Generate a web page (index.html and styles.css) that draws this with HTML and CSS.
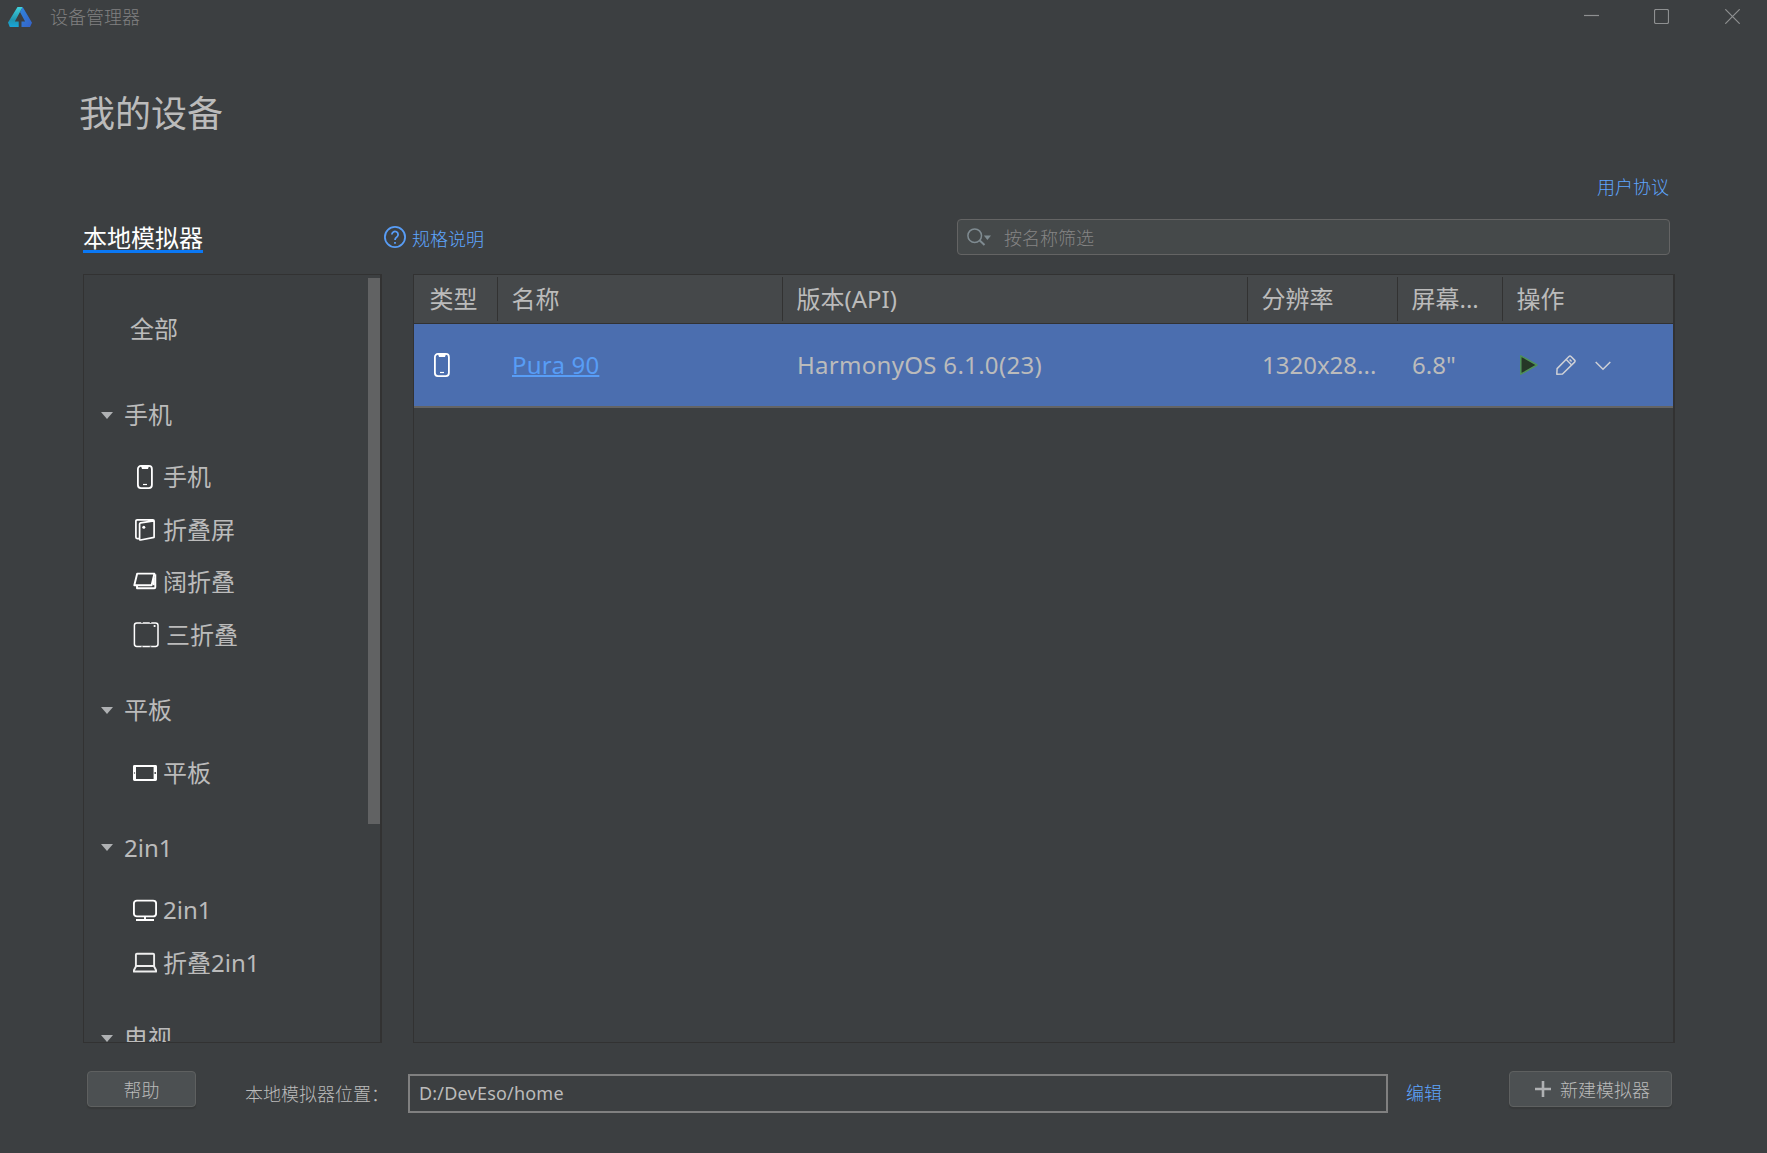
FILE: index.html
```html
<!DOCTYPE html>
<html lang="zh-CN">
<head>
    <meta charset="UTF-8">
    <title>设备管理器</title>
    <link rel="stylesheet" href="styles.css">
</head>
<body>

    <svg class="symbols">
        <symbol id="phone" viewBox="0 0 24 24">
            <rect x="4.9" y="0.9" width="14" height="22.2" rx="3" fill="none" stroke="#fff" stroke-width="1.8"/>
            <path d="M8 1h8l-1 3H9z" fill="#fff"/>
            <path d="M10 19.5h4" stroke="#fff" stroke-width="1.2"/>
        </symbol>
    </svg>

    <header class="titlebar">
        <svg class="logo" width="24" height="20" viewBox="0 0 24 20">
            <defs>
                <linearGradient id="logoLeft" x1="0" y1="0" x2="0" y2="1">
                    <stop offset="0" stop-color="#41d3dd"/>
                    <stop offset="0.65" stop-color="#1f94b0"/>
                    <stop offset="1" stop-color="#19a5d8"/>
                </linearGradient>
                <linearGradient id="logoRight" x1="0" y1="0" x2="1" y2="1">
                    <stop offset="0" stop-color="#2f86dd"/>
                    <stop offset="1" stop-color="#3561c8"/>
                </linearGradient>
            </defs>
            <path d="M9.5 0h5.2L6.8 14.6h3.9V20H1.8L0 15.6z" fill="url(#logoLeft)"/>
            <path d="M14.7 0L24 15.8 22 20h-8.5v-5.4h3.6L12 5z" fill="url(#logoRight)"/>
        </svg>
        <span class="window-title">设备管理器</span>
        <div class="window-buttons">
            <svg width="15" height="15"><path d="M0 6.5h15"/></svg>
            <svg width="15" height="15"><rect x="0.5" y="0.5" width="14" height="14" rx="1.5"/></svg>
            <svg width="15" height="15"><path d="M0.3 0.3l14.4 14.4M14.7 0.3L0.3 14.7"/></svg>
        </div>
    </header>

    <main>
        <h1>我的设备</h1>
        <div class="agreement"><a href="#">用户协议</a></div>

        <div class="toolbar">
            <span class="tab">本地模拟器</span>
            <a class="spec" href="#">
                <svg width="22" height="22" viewBox="0 0 22 22" fill="none" stroke="#589df6" stroke-width="1.8">
                    <circle cx="11" cy="11" r="10.1"/>
                    <path d="M7.9 8.6a3.1 3.1 0 1 1 4.9 2.5c-1.2.8-1.8 1.3-1.8 2.9"/>
                    <path d="M11 15.9v1.9"/>
                </svg>
                <span>规格说明</span>
            </a>
            <div class="search">
                <svg width="24" height="18" viewBox="0 0 24 18">
                    <circle cx="7.7" cy="7.7" r="6.8" fill="none" stroke="#7f8b91" stroke-width="1.5"/>
                    <path d="M12.5 12.3l5 4.7" stroke="#7f8b91" stroke-width="2"/>
                    <path d="M16.8 7.5H24l-3.6 4.5z" fill="#7f8b91"/>
                </svg>
                <span>按名称筛选</span>
            </div>
        </div>

        <div class="panels">
            <nav class="sidebar">
                <div class="all">全部</div>

                <div class="group">手机</div>
                <div class="item"><svg width="24" height="24"><use href="#phone"/></svg>手机</div>
                <div class="item">
                    <svg width="24" height="24" viewBox="0 0 24 24" fill="none" stroke="#fff" stroke-width="1.7" stroke-linejoin="round">
                        <path d="M6 20.6H4.2q-1.3 0-1.3-1.3V3.1q0-1.3 1.3-1.3h15.7q1.2 0 1.2 1.2v16.3L7.6 22q-1 .1-1-1V6q0-1 1-1.2l13-2"/>
                        <circle cx="10.8" cy="9.2" r="1.5" fill="#fff" stroke="none"/>
                    </svg>折叠屏
                </div>
                <div class="item">
                    <svg width="24" height="24" viewBox="0 0 24 24" fill="none" stroke="#fff" stroke-width="1.9" stroke-linejoin="round">
                        <path d="M4.2 3.6h17.2L18.6 15.2H1.3z"/>
                        <path d="M4 15.5v2.7h17.3q1 0 1-1V4.2"/>
                        <path d="M20.8 7.7v7.5"/>
                    </svg>阔折叠
                </div>
                <div class="item wide">
                    <svg width="26" height="26" viewBox="0 0 26 26" fill="none" stroke="#fff" stroke-width="1.5">
                        <rect x="1.4" y="0.9" width="23.6" height="23.6" rx="2.4"/>
                        <path d="M9 0v1M17.5 0v1M9 24.4v1M17.5 24.4v1" stroke="#3c3f41"/>
                        <circle cx="21.6" cy="4" r="1.1" fill="#fff" stroke="none"/>
                    </svg>三折叠
                </div>

                <div class="group">平板</div>
                <div class="item">
                    <svg width="24" height="24" viewBox="0 0 24 24">
                        <path fill="#fff" fill-rule="evenodd" d="M1.4 4h21.2q1.4 0 1.4 1.4v13.2q0 1.4-1.4 1.4H1.4Q0 20 0 18.6V5.4Q0 4 1.4 4zM3 6v12h17.6V6z"/>
                        <circle cx="1.5" cy="12" r=".7" fill="#3c3f41"/>
                        <circle cx="22.2" cy="12" r=".9" fill="#3c3f41"/>
                    </svg>平板
                </div>

                <div class="group">2in1</div>
                <div class="item">
                    <svg width="24" height="24" viewBox="0 0 24 24" fill="none" stroke="#fff" stroke-width="1.9">
                        <rect x=".9" y="2.6" width="22.2" height="15.8" rx="3"/>
                        <path d="M12 18v3M3 22h18"/>
                    </svg>2in1
                </div>
                <div class="item">
                    <svg width="24" height="24" viewBox="0 0 24 24" fill="none" stroke="#eee" stroke-width="1.9" stroke-linejoin="round">
                        <path d="M2.9 15V3.8q0-1 1-1h16.2q1 0 1 1V15z"/>
                        <path d="M3 15.3L.9 19.2v1.3h22.2v-1.3L21 15.3"/>
                    </svg>折叠2in1
                </div>

                <div class="group">电视</div>
                <div class="scrollbar"></div>
            </nav>

            <section class="devices">
                <div class="row head">
                    <div>类型</div>
                    <div>名称</div>
                    <div>版本(API)</div>
                    <div>分辨率</div>
                    <div>屏幕...</div>
                    <div>操作</div>
                </div>
                <div class="row selected">
                    <div class="type"><svg width="24" height="24"><use href="#phone"/></svg></div>
                    <div><a class="device-name" href="#">Pura 90</a></div>
                    <div class="version">HarmonyOS 6.1.0(23)</div>
                    <div>1320x28...</div>
                    <div>6.8"</div>
                    <div class="actions">
                        <svg width="20" height="20" viewBox="0 0 20 20">
                            <path d="M1.8 .8v18.4L18 10z" fill="#253627" stroke="#4f9158" stroke-width="1.5" stroke-linejoin="round"/>
                        </svg>
                        <svg width="20" height="20" viewBox="0 0 20 20" fill="none" stroke="#ced0d6" stroke-width="1.5" stroke-linejoin="round">
                            <path d="M.8 19.2l.3-5.6L13 1.5q1-1 2 0l3.6 3.6q1 1 0 2L6.5 19z"/>
                            <path d="M10.2 4.5l5.2 5.3M13.6 4.5l2 2"/>
                        </svg>
                        <svg width="16" height="10" viewBox="0 0 16 10" fill="none" stroke="#ced0d6" stroke-width="1.5">
                            <path d="M.7 1l7.3 7.3L15.3 1"/>
                        </svg>
                    </div>
                </div>
            </section>
        </div>

        <footer>
            <button class="help">帮助</button>
            <label>本地模拟器位置：</label>
            <div class="path">D:/DevEso/home</div>
            <a href="#">编辑</a>
            <button class="create">
                <svg width="16" height="16"><path d="M8 0v16M0 8h16" stroke="#afb1b3" stroke-width="2.6"/></svg>
                新建模拟器
            </button>
        </footer>
    </main>

</body>
</html>
```
FILE: styles.css
```css
* {
    box-sizing: border-box;
}

body {
    margin: 0;
    height: 1153px;
    overflow: hidden;
    background-color: #3c3f41;
    color: #bbbbbb;
    font-family: "Noto Sans", "Noto Sans CJK SC", sans-serif;
    font-size: 18px;
    font-weight: 300;
    line-height: 24px;
}

a {
    color: #589df6;
    text-decoration: none;
}

svg {
    flex: none;
    display: block;
}

.symbols {
    display: none;
}

.titlebar {
    display: flex;
    align-items: center;
    height: 34px;
    padding: 0 27px 0 8px;
}

.window-title {
    margin-left: 18px;
    color: #808080;
}

.window-buttons {
    display: flex;
    gap: 56px;
    margin: -1px 0 0 auto;
}

.window-buttons svg:first-child {
    margin-right: -1px;
}

.window-buttons svg {
    fill: none;
    stroke: #8e9091;
    stroke-width: 1.2;
}

main {
    padding: 0 92px 0 83px;
}

h1 {
    margin: 0 0 0 -4px;
    padding-top: 55px;
    font-size: 36px;
    font-weight: 400;
    line-height: 50px;
}

.agreement {
    margin-top: 36px;
    padding-right: 6px;
    text-align: right;
}

.agreement a,
.spec span,
footer a {
    color: #5ea6ff;
}

.toolbar {
    display: flex;
    align-items: flex-start;
    height: 75px;
    padding: 20px 5px 0 0;
}

.tab {
    height: 34px;
    border-bottom: 3px solid #0a78f5;
    color: #ffffff;
    font-size: 24px;
    font-weight: 400;
    line-height: 37px;
}

.spec {
    display: flex;
    gap: 6px;
    margin: 7px 0 0 181px;
}

.spec span {
    line-height: 26px;
}

.search {
    display: flex;
    align-items: center;
    width: 713px;
    height: 36px;
    margin-left: auto;
    padding-left: 9px;
    border: 1px solid #646464;
    border-radius: 4px;
    background-color: #45494a;
    color: #858585;
}

.search svg {
    margin-top: -1px;
}

.search span {
    margin: 2px 0 0 13px;
}

.panels {
    display: flex;
    gap: 31px;
    height: 769px;
    font-size: 24px;
    font-weight: 400;
}

.sidebar {
    position: relative;
    width: 299px;
    overflow: hidden;
    border: 1px solid #323232;
    border-right-width: 2px;
}

.all {
    padding: 36px 0 32px 46px;
    line-height: 36px;
}

.group {
    display: flex;
    align-items: center;
    padding: 31px 0 18px 17px;
    line-height: 36px;
    height: 85px;
}

.all + .group {
    padding-top: 18px;
    height: 72px;
}

.group::before {
    content: "";
    margin-right: 11px;
    border: 6.5px solid transparent;
    border-top: 7px solid #afb1b3;
    border-bottom: 0;
}

.item {
    display: flex;
    align-items: center;
    gap: 6px;
    height: 52.6px;
    padding-left: 49px;
}

.item.wide {
    gap: 7px;
}

.scrollbar {
    position: absolute;
    top: 3px;
    right: 0;
    width: 12px;
    height: 546px;
    background-color: #616263;
}

.devices {
    flex: 1;
    border: 1px solid #323232;
    border-right-width: 2px;
}

.row {
    display: grid;
    grid-template-columns: 84px 285px 465px 150px 105px 1fr;
    align-items: center;
}

.row > div {
    padding-left: 14px;
    white-space: nowrap;
}

.row > div:first-child {
    padding-left: 16px;
}

.head {
    height: 49px;
    border-bottom: 1px solid #323232;
    background-color: #45484a;
}

.row.head > div {
    height: 44px;
    padding-left: 13.5px;
    border-right: 1px solid #323232;
    line-height: 44px;
}

.row.head > div:first-child {
    padding-left: 15.5px;
}

.row.head > div:last-child {
    border-right: 0;
}

.selected {
    height: 84px;
    border-bottom: 2px solid #646464;
    background-color: #4b6eaf;
}

.device-name {
    letter-spacing: 0.2px;
    text-decoration: underline;
    text-decoration-thickness: 2px;
    text-underline-offset: 1px;
    text-decoration-skip-ink: none;
}

.version {
    letter-spacing: 0.3px;
}

.row > .actions {
    display: flex;
    align-items: center;
    padding-left: 16px;
}

.actions svg + svg {
    margin-left: 17px;
}

.actions svg:last-child {
    margin: 2px 0 0 19px;
}

footer {
    display: flex;
    align-items: flex-start;
    padding: 28px 3px 0 4px;
}

button {
    display: flex;
    align-items: center;
    justify-content: center;
    height: 36px;
    padding: 2px 0 0;
    border: 1px solid #5e6060;
    border-radius: 4px;
    background-color: #4c5052;
    box-shadow: 0 2px 1px #37393a;
    color: #bbbbbb;
    font: inherit;
}

.help {
    width: 109px;
}

footer label {
    width: 163px;
    padding: 11px 0 0 49px;
    white-space: nowrap;
}

.path {
    width: 980px;
    height: 39px;
    margin: 3px 0 0 49px;
    padding-left: 9px;
    border: 2px solid #808080;
    font-weight: 400;
    letter-spacing: 0.2px;
    line-height: 34px;
}

footer a {
    margin: 10px 0 0 18px;
}

.create {
    gap: 9px;
    width: 163px;
    margin-left: auto;
    padding-left: 4px;
}

.create svg {
    margin-top: -2px;
}
```
